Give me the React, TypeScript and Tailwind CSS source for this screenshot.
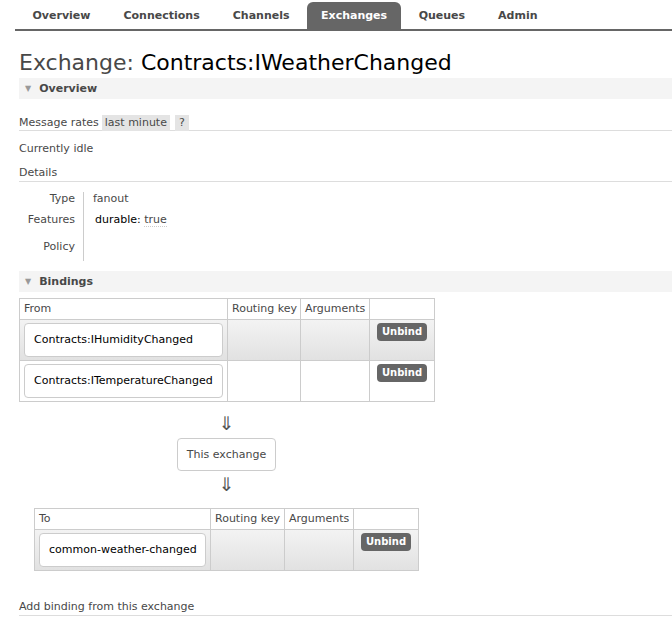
const font = { fontFamily: '"DejaVu Sans", Verdana, sans-serif' };

const tabs = ["Overview", "Connections", "Channels", "Exchanges", "Queues", "Admin"];

function Nav() {
  return (
    <div className="ml-[15px] flex h-[31px] items-end border-b-2 border-[#666] pl-[1px]">
      {tabs.map((t) => (
        <div
          key={t}
          className={
            t === "Exchanges"
              ? "mx-[1px] flex h-[27px] items-center rounded-t-[6px] bg-[#666] px-[14px] pt-[2px] text-[11px] font-bold text-white"
              : "flex h-[27px] items-center px-[16.5px] pt-[2px] text-[11px] font-bold text-[#484848]"
          }
        >
          {t}
        </div>
      ))}
    </div>
  );
}

function SectionHead({ title }: { title: string }) {
  return (
    <div className="flex h-[21px] items-center bg-[#f4f4f4] pl-[6px] text-[11px] leading-[14px] font-bold text-[#484848]">
      <span className="mr-[8px] text-[8px] text-[#999]">▼</span>
      {title}
    </div>
  );
}

function Pill({ text }: { text: string }) {
  return (
    <div className="flex h-[34px] items-center whitespace-nowrap rounded-[4px] border border-[#ccc] bg-white px-[9px] text-[11px] text-black">
      {text}
    </div>
  );
}

function Unbind() {
  return (
    <span className="inline-block rounded-[4px] bg-[#666] px-[5px] py-[2px] text-[10px] leading-[14px] font-bold text-white">
      Unbind
    </span>
  );
}

function BindTable({
  label,
  rows,
  widths,
}: {
  label: string;
  rows: string[];
  widths: [number, number, number, number];
}) {
  const total = widths.reduce((a, b) => a + b, 0);
  return (
    <table style={{ width: total }} className="table-fixed border-collapse text-[11px] leading-[14px] text-[#484848]">
      <colgroup>
        {widths.map((w, i) => (
          <col key={i} style={{ width: w }} />
        ))}
      </colgroup>
      <thead>
        <tr className="h-[21px]">
          <th className="whitespace-nowrap border border-[#ccc] px-[4px] text-left font-normal">{label}</th>
          <th className="whitespace-nowrap border border-[#ccc] px-[4px] text-left font-normal">Routing key</th>
          <th className="whitespace-nowrap border border-[#ccc] px-[4px] text-left font-normal">Arguments</th>
          <th className="border border-[#ccc]"></th>
        </tr>
      </thead>
      <tbody>
        {rows.map((r, i) => (
          <tr
            key={r}
            className={i % 2 === 0 ? "h-[41px] bg-gradient-to-b from-[#f3f3f3] to-[#e1e1e1]" : "h-[41px] bg-white"}
          >
            <td className="border border-[#ccc] px-[4px] py-[2px]">
              <Pill text={r} />
            </td>
            <td className="border border-[#ccc]"></td>
            <td className="border border-[#ccc]"></td>
            <td className="border border-[#ccc] pt-[3px] text-center align-top">
              <Unbind />
            </td>
          </tr>
        ))}
      </tbody>
    </table>
  );
}

function Arrow() {
  return <div className="h-[17px] text-center text-[19px] leading-[17px] text-[#555]">⇓</div>;
}

export default function App() {
  return (
    <div style={font} className="h-[623px] w-[672px] overflow-hidden bg-white text-[#484848]">
      <Nav />
      <div className="pl-[19px]">
        <h1 className="mt-[16px] text-[22px] leading-[31px] text-[#484848]">
          Exchange: <span className="text-black">Contracts:IWeatherChanged</span>
        </h1>
        <SectionHead title="Overview" />

        <div className="mt-[16px] flex h-[16px] items-center border-b border-[#ddd] text-[11px] leading-[14px]">
          <span className="mr-[3px]">Message rates</span>
          <span className="bg-[#e4e4e4] px-[3px] py-[1px]">last minute</span>
          <span className="ml-[5px] bg-[#e4e4e4] px-[4px] py-[1px]">?</span>
        </div>
        <div className="mt-[11px] text-[11px] leading-[14px]">Currently idle</div>
        <div className="mt-[10px] border-b border-[#ddd] pb-[1px] text-[11px] leading-[14px]">Details</div>

        <div className="mt-[10px] flex text-[11px] leading-[14px]">
          <div className="w-[56px] text-right">
            <div className="h-[21px]">Type</div>
            <div className="h-[27px]">Features</div>
            <div className="h-[21px]">Policy</div>
          </div>
          <div className="ml-[8px] border-l border-[#ccc] pl-[9px]">
            <div className="h-[21px]">fanout</div>
            <div className="h-[27px]">
              <span className="ml-[2px] text-black">durable:</span>{" "}
              <span className="border-b border-dotted border-[#ccc]">true</span>
            </div>
            <div className="h-[21px]"></div>
          </div>
        </div>

        <div className="mt-[10px]">
          <SectionHead title="Bindings" />
        </div>

        <div className="mt-[6px]">
          <BindTable
            label="From"
            rows={["Contracts:IHumidityChanged", "Contracts:ITemperatureChanged"]}
            widths={[208, 73, 69, 65]}
          />
        </div>

        <div className="flex w-[415px] flex-col items-center">
          <div className="mt-[13px]">
            <Arrow />
          </div>
          <div className="mt-[6px] rounded-[4px] border border-[#ccc] px-[9px] py-[9px] text-[11px] leading-[13px]">
            This exchange
          </div>
          <div className="mt-[5px]">
            <Arrow />
          </div>
        </div>

        <div className="ml-[15px] mt-[15px]">
          <BindTable label="To" rows={["common-weather-changed"]} widths={[176, 74, 69, 65]} />
        </div>

        <div className="mt-[29px] border-b border-[#ddd] pb-[1px] text-[11px] leading-[14px]">
          Add binding from this exchange
        </div>
      </div>
    </div>
  );
}
